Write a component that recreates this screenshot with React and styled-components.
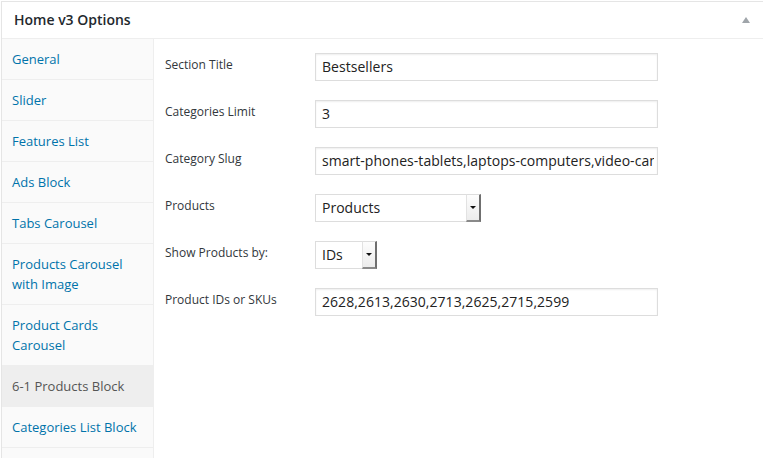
import React from "react";
import styled, { createGlobalStyle } from "styled-components";

const Global = createGlobalStyle`
  html, body { margin: 0; padding: 0; background: #fff; overflow: hidden; }
  body { font-family: "Open Sans", "Liberation Sans", sans-serif; }
  * { box-sizing: border-box; }
`;

const Page = styled.div`
  padding: 1px 0 0 1px;
  width: 820px;
`;

const Panel = styled.div`
  border: 1px solid #e5e5e5;
  background: #fff;
  height: 480px;
  display: flex;
  flex-direction: column;
  box-shadow: 0 1px 1px rgba(0, 0, 0, 0.04);
`;

const Header = styled.div`
  height: 37px;
  border-bottom: 1px solid #eee;
  display: flex;
  align-items: center;
  padding: 0 0 0 12px;
  width: 762px;
`;

const Title = styled.h2`
  margin: 0;
  font-size: 14px;
  font-weight: 600;
  line-height: 36px;
  color: #23282d;
  flex: 1;
`;

const Toggle = styled.span`
  width: 0;
  height: 0;
  border-left: 4px solid transparent;
  border-right: 4px solid transparent;
  border-bottom: 6px solid #a0a5aa;
  margin-right: 14px;
  margin-top: -1px;
`;

const Body = styled.div`
  flex: 1;
  display: flex;
`;

const Sidebar = styled.ul`
  list-style: none;
  margin: 0;
  padding: 0;
  width: 152px;
  background: #fafafa;
  border-right: 1px solid #eee;
`;

const Item = styled.li`
  padding: 10px 10px;
  font-size: 13px;
  line-height: 20px;
  border-bottom: 1px solid #eee;
  color: ${(p) => (p.$active ? "#555" : "#0073aa")};
  background: ${(p) => (p.$active ? "#eee" : "transparent")};
`;

const Content = styled.div`
  flex: 1;
  padding: 14px 0 0 11px;
  display: flex;
  flex-direction: column;
  gap: 19px;
`;

const Row = styled.div`
  display: flex;
  align-items: flex-start;
`;

const Label = styled.div`
  width: 150px;
  padding-top: 2px;
  font-size: 12px;
  line-height: 20px;
  color: #32373c;
`;

const Input = styled.div`
  width: 343px;
  height: 28px;
  border: 1px solid #ddd;
  box-shadow: inset 0 1px 2px rgba(0, 0, 0, 0.07);
  padding: 0 3px 0 6px;
  font-size: 14px;
  line-height: 26px;
  color: #222;
  white-space: nowrap;
  overflow: hidden;
  background: #fff;
`;

const InputText = styled.span`
  display: block;
  overflow: hidden;
  letter-spacing: 0.04px;
`;

const Select = styled.div`
  width: ${(p) => p.$w}px;
  height: 28px;
  border-top: 1px solid #ddd;
  border-left: 1px solid #ddd;
  border-bottom: 1px solid #ddd;
  display: flex;
  background: #fff;
`;

const SelectText = styled.div`
  flex: 1;
  padding: 0 6px;
  font-size: 14px;
  line-height: 26px;
  color: #222;
`;

const Arrow = styled.div`
  width: 15px;
  height: 28px;
  margin-top: -1px;
  margin-bottom: -1px;
  background: linear-gradient(#fdfdfd, #ececec);
  border-left: 1px solid #e2e2e2;
  border-top: 1px solid #ddd;
  border-right: 2px solid #6f6f6f;
  border-bottom: 2px solid #8a8a8a;
  display: flex;
  align-items: center;
  justify-content: center;
  &::after {
    content: "";
    width: 0;
    height: 0;
    border-left: 3px solid transparent;
    border-right: 3px solid transparent;
    border-top: 3px solid #111;
  }
`;

const tabs = [
  "General",
  "Slider",
  "Features List",
  "Ads Block",
  "Tabs Carousel",
  "Products Carousel with Image",
  "Product Cards Carousel",
  "6-1 Products Block",
  "Categories List Block",
];

export default function App() {
  return (
    <Page>
      <Global />
      <Panel>
        <Header>
          <Title>Home v3 Options</Title>
          <Toggle />
        </Header>
        <Body>
          <Sidebar>
            {tabs.map((t) => (
              <Item key={t} $active={t === "6-1 Products Block"}>
                {t}
              </Item>
            ))}
          </Sidebar>
          <Content>
            <Row>
              <Label>Section Title</Label>
              <Input>
                <InputText>Bestsellers</InputText>
              </Input>
            </Row>
            <Row>
              <Label>Categories Limit</Label>
              <Input>
                <InputText>3</InputText>
              </Input>
            </Row>
            <Row>
              <Label>Category Slug</Label>
              <Input>
                <InputText>smart-phones-tablets,laptops-computers,video-cameras</InputText>
              </Input>
            </Row>
            <Row>
              <Label>Products</Label>
              <Select $w={166}>
                <SelectText>Products</SelectText>
                <Arrow />
              </Select>
            </Row>
            <Row>
              <Label>Show Products by:</Label>
              <Select $w={62}>
                <SelectText>IDs</SelectText>
                <Arrow />
              </Select>
            </Row>
            <Row>
              <Label>Product IDs or SKUs</Label>
              <Input>
                <InputText>2628,2613,2630,2713,2625,2715,2599</InputText>
              </Input>
            </Row>
          </Content>
        </Body>
      </Panel>
    </Page>
  );
}
